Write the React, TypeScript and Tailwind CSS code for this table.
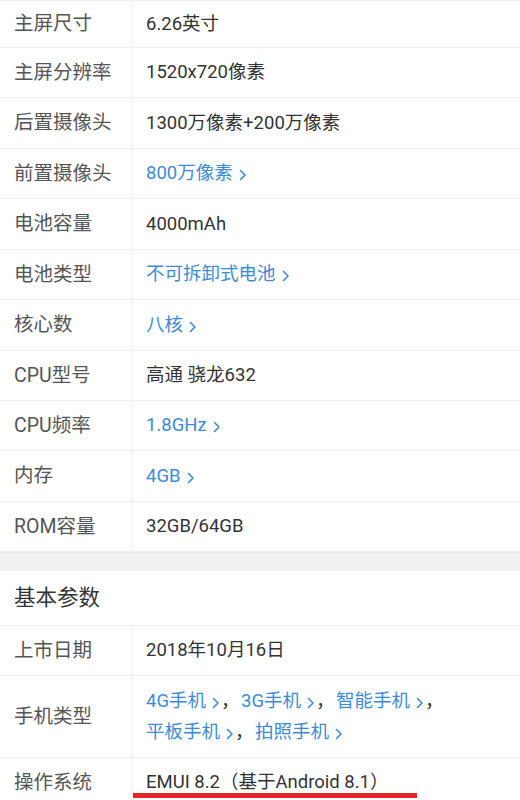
import React from 'react';

type Val = { text: string; link?: boolean };
type Row = { label: string; values: Val[][]; h: string };

const font = { fontFamily: 'Roboto, "Noto Sans CJK SC", sans-serif' };

const specRows: Row[] = [
  { label: '主屏尺寸', values: [[{ text: '6.26英寸' }]], h: 'h-[47px]' },
  { label: '主屏分辨率', values: [[{ text: '1520x720像素' }]], h: 'h-[50px]' },
  { label: '后置摄像头', values: [[{ text: '1300万像素+200万像素' }]], h: 'h-[51px]' },
  { label: '前置摄像头', values: [[{ text: '800万像素', link: true }]], h: 'h-[50px]' },
  { label: '电池容量', values: [[{ text: '4000mAh' }]], h: 'h-[51px]' },
  { label: '电池类型', values: [[{ text: '不可拆卸式电池', link: true }]], h: 'h-[50px]' },
  { label: '核心数', values: [[{ text: '八核', link: true }]], h: 'h-[51px]' },
  { label: 'CPU型号', values: [[{ text: '高通 骁龙632' }]], h: 'h-[50px]' },
  { label: 'CPU频率', values: [[{ text: '1.8GHz', link: true }]], h: 'h-[50px]' },
  { label: '内存', values: [[{ text: '4GB', link: true }]], h: 'h-[51px]' },
  { label: 'ROM容量', values: [[{ text: '32GB/64GB' }]], h: 'h-[50px]' },
];

const baseRows: Row[] = [
  { label: '上市日期', values: [[{ text: '2018年10月16日' }]], h: 'h-[50px]' },
  {
    label: '手机类型',
    values: [
      [
        { text: '4G手机', link: true },
        { text: '3G手机', link: true },
        { text: '智能手机', link: true },
      ],
      [
        { text: '平板手机', link: true },
        { text: '拍照手机', link: true },
      ],
    ],
    h: 'h-[82px]',
  },
  { label: '操作系统', values: [[{ text: 'EMUI 8.2（基于Android 8.1）' }]], h: 'h-[50px]' },
];

const Chevron = () => (
  <svg width="10" height="14" viewBox="0 0 10 14" className="ml-[5px] mt-[3px] shrink-0">
    <path d="M2.5 2.5 L7 7 L2.5 11.5" fill="none" stroke="#3d8bd8" strokeWidth="1.6" strokeLinecap="round" strokeLinejoin="round" />
  </svg>
);

const ValueLine = ({ items, last }: { items: Val[]; last: boolean }) => (
  <div className="flex items-center">
    {items.map((v, i) => (
      <React.Fragment key={i}>
        {v.link ? (
          <span className="flex items-center text-[#3d8bd8]">
            {v.text}
            <Chevron />
          </span>
        ) : (
          <span className="text-[#333333]">{v.text}</span>
        )}
        {(i < items.length - 1 || (!last && v.link)) && (
          <span className="text-[#333333] w-[20px]">，</span>
        )}
      </React.Fragment>
    ))}
  </div>
);

const TableRow = ({ row, underline }: { row: Row; underline?: boolean }) => (
  <div className={`flex border-b border-[#efefef] ${row.h}`}>
    <div className="w-[132px] shrink-0 border-r border-[#efefef] flex items-center pl-[14px] text-[19.5px] text-[#555555]">
      {row.label}
    </div>
    <div className="relative flex-1 flex flex-col justify-center pl-[14px] text-[18.5px] leading-[31px]">
      {row.values.map((line, i) => (
        <ValueLine key={i} items={line} last={i === row.values.length - 1} />
      ))}
      {underline && (
        <div className="absolute left-[1px] top-[35px] w-[284px] h-[5px] bg-[#e3262c]" />
      )}
    </div>
  </div>
);

export default function App() {
  return (
    <div className="w-[520px] h-[800px] overflow-hidden bg-white" style={font}>
      <div className="border-t border-[#efefef]">
        {specRows.map(r => (
          <TableRow key={r.label} row={r} />
        ))}
      </div>
      <div className="h-[19px] bg-[#f1f1f1] border-t border-[#e6e6e6]" />
      <div className="h-[55px] flex items-center pl-[14px] text-[21.5px] text-[#333333] border-b border-[#efefef]">
        基本参数
      </div>
      {baseRows.map(r => (
        <TableRow key={r.label} row={r} underline={r.label === '操作系统'} />
      ))}
    </div>
  );
}
